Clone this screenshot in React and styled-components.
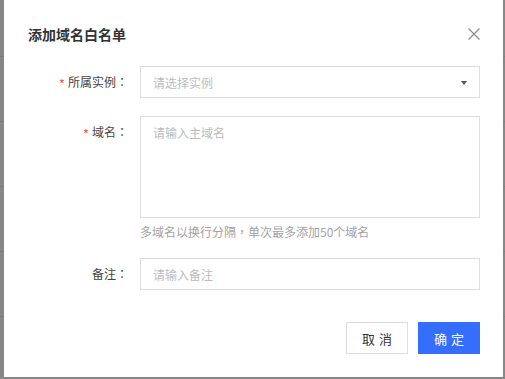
import React from "react";
import styled, { createGlobalStyle } from "styled-components";

const Global = createGlobalStyle`
  html, body { margin: 0; padding: 0; }
  body {
    background-color: #878787;
    background-image: repeating-linear-gradient(to bottom, transparent 0 64px, #7c7c7c 64px 65px);
    background-position: 0 -8px;
    font-family: "Noto Sans CJK SC", "Noto Sans", sans-serif;
  }
  * { box-sizing: border-box; }
`;

const Page = styled.div`
  display: flex;
  padding: 0 2px 2px 4px;
  height: 379px;
  width: 505px;
`;

const Dialog = styled.div`
  background: #fff;
  width: 499px;
  height: 377px;
  display: flex;
  flex-direction: column;
  padding: 24px 23px 23px 24px;
`;

const Header = styled.div`
  display: flex;
  align-items: center;
  justify-content: space-between;
  height: 20px;
  margin-bottom: 22px;
`;

const Title = styled.div`
  font-size: 14px;
  font-weight: 700;
  color: #333;
  line-height: 20px;
`;

const Close = styled.button`
  border: 0;
  background: none;
  padding: 0;
  width: 12px;
  height: 12px;
  display: flex;
  cursor: pointer;
`;

const Form = styled.div`
  display: flex;
  flex-direction: column;
`;

const Row = styled.div`
  display: flex;
  gap: 12px;
  margin-bottom: ${(p) => p.$mb || 0}px;
`;

const Label = styled.div`
  width: 100px;
  flex: none;
  text-align: right;
  font-size: 12px;
  line-height: 32px;
  height: 32px;
  color: #444;
  white-space: nowrap;
`;

const Star = styled.span`
  color: #f5222d;
  margin-right: 4px;
  font-family: "Liberation Sans", sans-serif;
  font-size: 11px;
`;

const Punct = styled.span`
  font-family: "Noto Sans CJK TC", "Noto Sans CJK SC", sans-serif;
`;

const Control = styled.div`
  flex: 1;
  display: flex;
  flex-direction: column;
`;

const fieldBase = `
  width: 100%;
  border: 1px solid #dedede;
  background: #fff;
  font-family: "Noto Sans CJK SC", "Noto Sans", sans-serif;
  font-size: 12px;
  color: #333;
  outline: none;
  border-radius: 0;
  &::placeholder { color: #bcbcbc; }
`;

const Select = styled.div`
  height: 32px;
  border: 1px solid #dedede;
  display: flex;
  align-items: center;
  justify-content: space-between;
  padding: 0 12px 0 12px;
  font-size: 12px;
  color: #bcbcbc;
`;

const Arrow = styled.span`
  width: 0;
  height: 0;
  border-left: 3.5px solid transparent;
  border-right: 3.5px solid transparent;
  border-top: 4px solid #555;
  margin-top: 1px;
`;

const TextArea = styled.textarea`
  ${fieldBase}
  height: 102px;
  resize: none;
  padding: 7px 12px;
  line-height: 18px;
`;

const Input = styled.input`
  ${fieldBase}
  height: 32px;
  padding: 0 12px;
`;

const Hint = styled.div`
  font-size: 12px;
  line-height: 16px;
  color: #a3a3a3;
  margin-top: 6px;
`;

const Footer = styled.div`
  display: flex;
  justify-content: flex-end;
  gap: 10px;
  margin-top: 32px;
`;

const Button = styled.button`
  width: 62px;
  height: 32px;
  font-family: "Noto Sans CJK SC", "Noto Sans", sans-serif;
  font-size: 13px;
  letter-spacing: 4px;
  text-indent: 4px;
  border: 1px solid ${(p) => (p.$primary ? "#356dfd" : "#dedede")};
  background: ${(p) => (p.$primary ? "#356dfd" : "#fff")};
  color: ${(p) => (p.$primary ? "#fff" : "#333")};
  cursor: pointer;
  padding: 0;
`;

export default function App() {
  return (
    <>
      <Global />
      <Page>
        <Dialog>
          <Header>
            <Title>添加域名白名单</Title>
            <Close aria-label="close">
              <svg width="12" height="12" viewBox="0 0 12 12">
                <path d="M0.5 0.5 L11.5 11.5 M11.5 0.5 L0.5 11.5" stroke="#8c8c8c" strokeWidth="1.2" fill="none" />
              </svg>
            </Close>
          </Header>
          <Form>
            <Row $mb={18}>
              <Label><Star>*</Star>所属实例<Punct>：</Punct></Label>
              <Control>
                <Select>
                  <span>请选择实例</span>
                  <Arrow />
                </Select>
              </Control>
            </Row>
            <Row $mb={18}>
              <Label><Star>*</Star>域名<Punct>：</Punct></Label>
              <Control>
                <TextArea placeholder="请输入主域名" />
                <Hint>多域名以换行分隔<Punct>，</Punct>单次最多添加50个域名</Hint>
              </Control>
            </Row>
            <Row>
              <Label>备注<Punct>：</Punct></Label>
              <Control>
                <Input placeholder="请输入备注" />
              </Control>
            </Row>
          </Form>
          <Footer>
            <Button>取消</Button>
            <Button $primary>确定</Button>
          </Footer>
        </Dialog>
      </Page>
    </>
  );
}
